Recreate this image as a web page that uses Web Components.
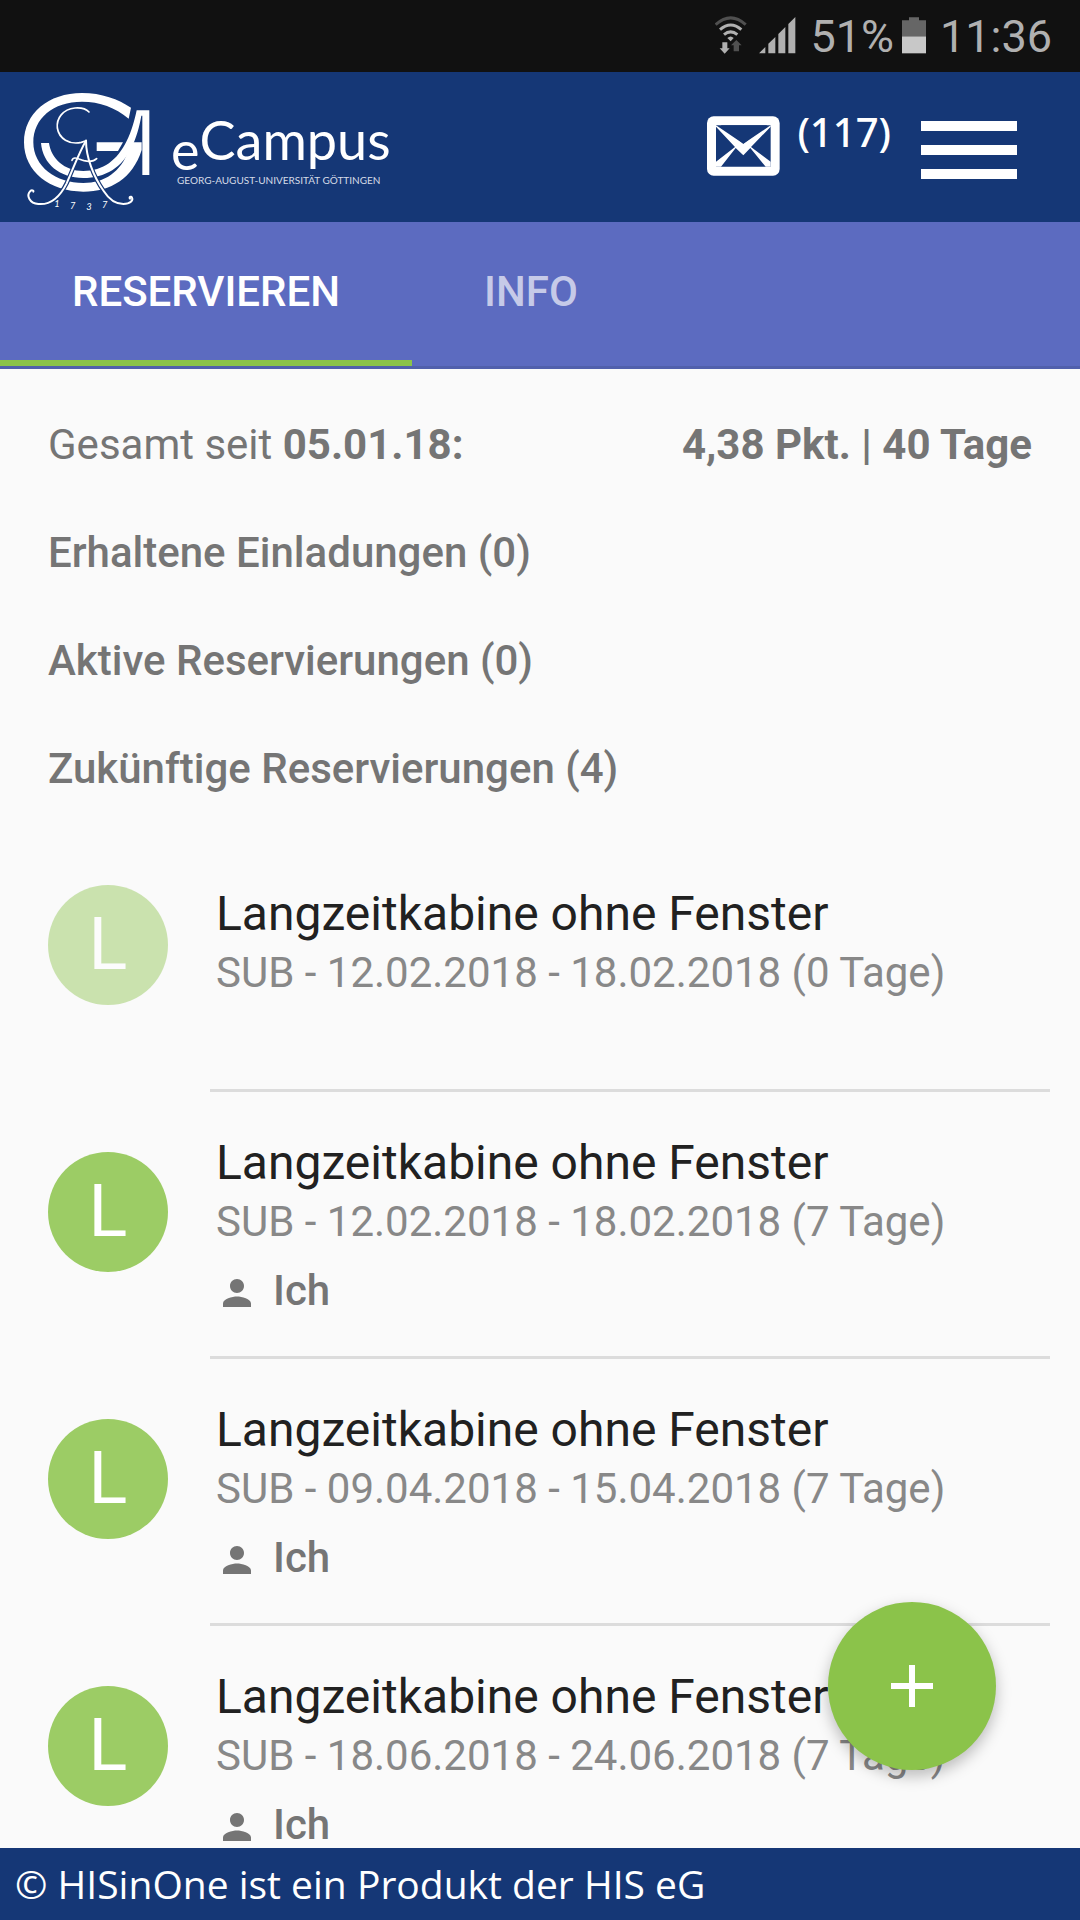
<!DOCTYPE html>
<html lang="de">
<head>
<meta charset="utf-8">
<meta name="viewport" content="width=device-width">
<title>eCampus – Reservieren</title>
<style>
  body { margin: 0; font-family: Roboto, sans-serif; background: #fafafa; color: #757575; }
</style>
</head>
<body>
<ec-app>
  <ec-status slot="top"></ec-status>
  <ec-header slot="top" count="117"></ec-header>
  <ec-tabs slot="top"></ec-tabs>
  <ec-row><span>Gesamt seit <b>05.01.18:</b></span><b slot="end">4,38 Pkt. | 40 Tage</b></ec-row>
  <ec-row heading>Erhaltene Einladungen (0)</ec-row>
  <ec-row heading>Aktive Reservierungen (0)</ec-row>
  <ec-row heading>Zukünftige Reservierungen (4)</ec-row>
  <ec-list>
    <ec-item name="Langzeitkabine ohne Fenster" faded>SUB - 12.02.2018 - 18.02.2018 (0 Tage)</ec-item>
    <ec-item name="Langzeitkabine ohne Fenster" person="Ich">SUB - 12.02.2018 - 18.02.2018 (7 Tage)</ec-item>
    <ec-item name="Langzeitkabine ohne Fenster" person="Ich">SUB - 09.04.2018 - 15.04.2018 (7 Tage)</ec-item>
    <ec-item name="Langzeitkabine ohne Fenster" person="Ich">SUB - 18.06.2018 - 24.06.2018 (7 Tage)</ec-item>
  </ec-list>
  <ec-fab slot="action" label="Neue Reservierung"></ec-fab>
  <ec-footer slot="bottom">© HISinOne ist ein Produkt der HIS eG</ec-footer>
</ec-app>
<script>
class Base extends HTMLElement {
  connectedCallback() {
    if (!this.shadowRoot) this.attachShadow({ mode: 'open' }).innerHTML = this.view();
  }
}

customElements.define('ec-app', class extends Base {
  view() { return `
    <style>
      :host { display: flex; flex-direction: column; height: 100vh; }
      .frame { flex: 1; min-height: 0; position: relative; }
      main { height: 100%; overflow: hidden; box-sizing: border-box; padding-top: 22px; }
      .action { position: absolute; right: 84px; bottom: 78px; }
    </style>
    <slot name="top"></slot>
    <div class="frame">
      <main><slot></slot></main>
      <div class="action"><slot name="action"></slot></div>
    </div>
    <slot name="bottom"></slot>`; }
});

customElements.define('ec-status', class extends Base {
  view() { return `
    <style>
      :host { display: flex; align-items: center; justify-content: flex-end; height: 72px;
              padding-right: 28px; background: #111; color: #b0b0b0; font-size: 45px; line-height: 72px; }
      svg { display: block; margin-bottom: 2px; }
      span { padding-top: 2px; }
      .wifi { margin-right: 12px; }
      .signal { margin-right: 14px; }
      .battery { margin-left: 8px; margin-right: 14px; }
    </style>
    <svg class="wifi" width="32" height="38" viewBox="105 47 96 114" aria-hidden="true">
      <g fill="none" stroke-width="9">
        <path d="M107 73Q152 32 197 73" stroke="#505050"/>
        <path d="M120 88Q152 60 184 88" stroke="#b0b0b0"/>
        <path d="M132 103Q152 86 172 103" stroke="#b0b0b0"/>
      </g>
      <path d="M142 113Q152 104 161 113L152 123z" fill="#b0b0b0"/>
      <path d="M127 126H142V144H149L134 160L119 144H127z" fill="#b0b0b0"/>
      <path d="M161 153V135H153L169 119L185 135H177V153z" fill="#505050"/>
    </svg>
    <svg class="signal" width="37" height="38" viewBox="236 47 111 114" fill="#b0b0b0" aria-hidden="true">
      <path d="M236 159L255 140V159zM264 159V130L285 110V159zM294 159V101L315 80V159zM324 159V71L345 50V159z"/>
    </svg>
    <span>51%</span>
    <svg class="battery" width="24" height="38" viewBox="666 47 72 114" aria-hidden="true">
      <path d="M666 60H687V51H717V60H738V108H666z" fill="#666"/>
      <path d="M666 108H738V159H666z" fill="#c8c8c8"/>
    </svg>
    <span>11:36</span>`; }
});

customElements.define('ec-logo', class extends Base {
  view() { return `
    <style>
      :host { display: flex; color: #fff; font-family: Lato, sans-serif; }
      svg { display: block; }
      .words { display: flex; flex-direction: column; padding: 25px 0 0 16px; }
      .name { display: flex; font-size: 54px; line-height: 50px; }
      .e { padding-top: 10px; }
      .sub { padding-left: 6px; font-size: 10px; line-height: 10px; white-space: nowrap; color: #d5dbe7; }
    </style>
    <svg width="135" height="122" viewBox="60 60 405 366" aria-hidden="true">
      <g fill="#fff">
        <path d="M393 113L386 146C345 112 300 95 246 95C160 95 100 145 100 217C100 290 168 339 250 339C315 339 362 305 385 243L400 217H425V240C398 325 333 365 250 365C150 365 72 305 72 217C72 130 145 69 246 69C305 69 355 88 393 113z"/>
        <path d="M123 219H147C153 265 193 303 250 303C310 303 352 270 380 213C394 186 404 150 410 121H448V315H427V137H424C418 172 408 205 396 230C368 292 315 324 250 324C180 324 128 282 123 219z"/>
        <path d="M290 217H369L354 243H290z"/>
      </g>
      <g fill="none" stroke-linecap="round">
        <path d="M256 214C238 245 222 290 200 340C178 384 147 403 118 402M258 214C258 260 280 320 311 363C325 385 347 402 370 402" stroke="#153776" stroke-width="13"/>
        <path d="M267 126C255 113 238 113 225 114C188 118 169 145 172 174C177 206 208 225 244 217L258 212" stroke="#fff" stroke-width="5"/>
        <path d="M258 212C238 245 222 290 200 340C178 384 147 405 115 402C88 400 79 376 90 364C95 359 102 361 100 365" stroke="#fff" stroke-width="6"/>
        <path d="M258 212C258 260 280 320 311 363C325 385 347 402 370 402C392 402 400 391 396 383C393 377 386 381 390 386" stroke="#fff" stroke-width="6"/>
        <path d="M216 271C220 257 237 268 252 272C270 276 282 274 290 266" stroke="#fff" stroke-width="5"/>
      </g>
      <g fill="#fff" font-family="Lato, sans-serif" font-style="italic" font-size="28">
        <text x="163" y="411">1</text><text x="210" y="418">7</text>
        <text x="259" y="419">3</text><text x="306" y="414">7</text>
      </g>
    </svg>
    <div class="words">
      <div class="name"><span class="e">e</span><span>Campus</span></div>
      <div class="sub">GEORG-AUGUST-UNIVERSITÄT GÖTTINGEN</div>
    </div>`; }
});

customElements.define('ec-header', class extends Base {
  view() { return `
    <style>
      :host { display: flex; align-items: flex-start; height: 132px; padding: 18px 63px 0 20px; background: #153776; color: #fff; }
      a { margin-left: auto; display: flex; gap: 17px; color: inherit; text-decoration: none;
          font: 500 40px/54px "Noto Sans", sans-serif; padding-top: 15px; }
      svg { display: block; }
      .mail { margin-top: 11px; }
      button { all: unset; margin: 31px 0 0 30px; cursor: pointer; }
    </style>
    <ec-logo></ec-logo>
    <a href="#nachrichten" aria-label="Nachrichten">
      <svg class="mail" width="73" height="60" viewBox="81 348 219 180" aria-hidden="true">
        <rect x="81" y="349" width="218" height="178" rx="20" fill="#fff"/>
        <path d="M108 376H272V500H108z" fill="#153776"/>
        <path d="M108 376L190 431L272 376V380L213 441L272 485V500H257L211 444L190 466L167 444L123 500H108V485L165 441L108 380z" fill="#fff"/>
        <path d="M122 376H262L190 431z" fill="#153776"/>
      </svg>
      <span>(${this.getAttribute('count')})</span>
    </a>
    <button aria-label="Menü">
      <svg width="96" height="58" viewBox="0 0 96 58" fill="#fff" aria-hidden="true"><path d="M0 0H96V10H0zM0 24H96V34H0zM0 48H96V58H0z"/></svg>
    </button>`; }
});

customElements.define('ec-tabs', class extends Base {
  view() { return `
    <style>
      :host { display: flex; height: 144px; background: #5c6bc0; border-bottom: 3px solid #5160ac; }
      button { all: unset; box-sizing: border-box; padding: 0 72px; cursor: pointer; color: #c6cae8;
               height: 144px; font-size: 42px; font-weight: 500; line-height: 140px; border-bottom: 6px solid transparent; }
      button[aria-selected=true] { color: #fff; border-color: #8bc34a; }
    </style>
    <button role="tab" aria-selected="true">RESERVIEREN</button>
    <button role="tab" aria-selected="false">INFO</button>`; }
});

customElements.define('ec-row', class extends Base {
  view() { return `
    <style>
      :host { display: flex; justify-content: space-between; padding: 0 48px; font-size: 42px; line-height: 108px; }
      :host([heading]) { font-weight: 500; }
    </style>
    <div><slot></slot></div><slot name="end"></slot>`; }
});

customElements.define('ec-list', class extends Base {
  view() { return `
    <style>:host { display: block; margin-top: 2px; }</style>
    <slot></slot>`; }
});

customElements.define('ec-item', class extends Base {
  view() {
    const name = this.getAttribute('name');
    const person = this.getAttribute('person');
    return `
    <style>
      :host { display: block; }
      .body { display: flex; gap: 48px; box-sizing: border-box; height: 264px; padding: 0 48px; }
      .avatar { flex: none; width: 120px; height: 120px; margin-top: 60px; border-radius: 50%;
                background: #9ccc65; color: #fff; text-align: center; font-size: 72px; line-height: 120px; }
      :host([faded]) .avatar { opacity: .5; }
      .text { padding-top: 42px; white-space: nowrap; }
      :host([faded]) .text { padding-top: 60px; }
      h3 { margin: 0; color: #212121; font-size: 48px; font-weight: 400; line-height: 58px; }
      p { margin: 0; color: #888; font-size: 42px; line-height: 60px; }
      .person { display: flex; align-items: center; gap: 15px; color: #757575; font-weight: 500; line-height: 78px; }
      .person svg { margin-top: 3px; }
      hr { margin: 0 30px 0 210px; border: 0; height: 3px; background: #dcdcdc; }
    </style>
    <div class="body">
      <div class="avatar">${name[0]}</div>
      <div class="text">
        <h3>${name}</h3>
        <p><slot></slot></p>
        ${person ? `<p class="person"><svg width="42" height="42" viewBox="0 0 24 24" fill="#757575" aria-hidden="true"><path d="M12 12c2.21 0 4-1.79 4-4s-1.790-4-4-4-4 1.790-4 4 1.790 4 4 4zm0 2c-2.670 0-8 1.340-8 4v2h16v-2c0-2.660-5.330-4-8-4z"/></svg>${person}</p>` : ''}
      </div>
    </div>
    <hr>`; }
});

customElements.define('ec-fab', class extends Base {
  view() { return `
    <style>
      button { all: unset; display: flex; align-items: center; justify-content: center; width: 168px; height: 168px;
               border-radius: 50%; background: #8bc34a; cursor: pointer; box-shadow: 0 6px 15px rgba(0,0,0,.26); }
    </style>
    <button aria-label="${this.getAttribute('label')}">
      <svg width="42" height="42" viewBox="0 0 42 42" fill="#fff" aria-hidden="true"><path d="M18 0H24V18H42V24H24V42H18V24H0V18H18z"/></svg>
    </button>`; }
});

customElements.define('ec-footer', class extends Base {
  view() { return `
    <style>
      :host { display: block; padding-left: 15px; background: #153776; color: #fff; font: 39px/72px "Open Sans", sans-serif; }
    </style>
    <slot></slot>`; }
});
</script>
</body>
</html>
